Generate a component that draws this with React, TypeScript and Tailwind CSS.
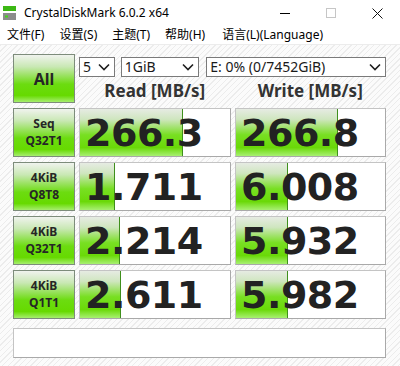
import React from "react";

interface Result {
    label: [string, string];
    read: string;
    write: string;
    readBar: number;
    writeBar: number;
}

const rows: Result[] = [
    {label: ["Seq", "Q32T1"], read: "266.3", write: "266.8", readBar: 103, writeBar: 102},
    {label: ["4KiB", "Q8T8"], read: "1.711", write: "6.008", readBar: 35, writeBar: 52},
    {label: ["4KiB", "Q32T1"], read: "2.214", write: "5.932", readBar: 40, writeBar: 52},
    {label: ["4KiB", "Q1T1"], read: "2.611", write: "5.982", readBar: 41, writeBar: 52},
];

const cjk = "font-['Noto_Sans','Noto_Sans_CJK_SC',sans-serif]";
const greenBtn =
    "border border-[#7d8c7b] bg-[linear-gradient(180deg,#f0f3ee_0%,#c9e8b4_25%,#6cdc10_62%,#66da00_86%,#a6ee6e_100%)] flex flex-col items-center justify-center text-[#262626] font-bold";

function Chevron() {
    return (
        <svg width="12" height="8" viewBox="0 0 12 8" className="shrink-0">
            <polyline points="1,1.5 6,6.5 11,1.5" fill="none" stroke="#1e1e1e" strokeWidth="1.6" />
        </svg>
    );
}

function Select({text, w}: {text: string; w: string}) {
    return (
        <div className={`${w} h-[20px] bg-white border border-[#7a7a7a] flex items-center justify-between pl-[3px] pr-[4px] text-[14px] text-[#1a1a1a] leading-none`}>
            <span>{text}</span>
            <Chevron />
        </div>
    );
}

function ResultBox({value, bar}: {value: string; bar: number}) {
    return (
        <div className="relative h-full border border-[#c4c4c4] border-r-[#a9a9a9] border-b-[#a9a9a9] bg-white flex items-center">
            <div
                className="absolute left-0 top-0 bottom-0 border-r border-[#3f8f1c] bg-[linear-gradient(180deg,#e6ebe3_0%,#cfe6bf_22%,#78df22_55%,#6ad908_82%,#a8f072_100%)]"
                style={{width: bar}}
            />
            <span className="relative pl-[5px] font-['DejaVu_Sans',sans-serif] font-bold text-[38px] leading-none text-[#222] tracking-[-0.5px]">
                {value}
            </span>
        </div>
    );
}

export default function App() {
    return (
        <div className={`w-[400px] h-[366px] bg-white flex flex-col overflow-hidden ${cjk}`}>
            {/* title bar */}
            <div className="h-[26px] flex items-center shrink-0">
                <svg width="13" height="14" viewBox="0 0 13 14" className="ml-[3px]">
                    <rect x="0" y="0" width="13" height="5" fill="#3cb814" />
                    <rect x="0" y="7" width="13" height="7" fill="#8c8c8c" />
                    <rect x="2" y="9.5" width="3" height="2" fill="#46d21e" />
                </svg>
                <span className="ml-[8px] text-[12px] text-black">CrystalDiskMark 6.0.2 x64</span>
                <div className="ml-auto flex items-center h-full">
                    <div className="w-[46px] h-full flex items-center justify-center">
                        <div className="w-[10px] h-px bg-black" />
                    </div>
                    <div className="w-[46px] h-full flex items-center justify-center">
                        <div className="w-[10px] h-[10px] border border-[#c6c6c6]" />
                    </div>
                    <div className="w-[46px] h-full flex items-center justify-center">
                        <svg width="11" height="11" viewBox="0 0 11 11">
                            <path d="M0.5 0.5 L10.5 10.5 M10.5 0.5 L0.5 10.5" stroke="#111" strokeWidth="1" />
                        </svg>
                    </div>
                </div>
            </div>

            {/* menu bar */}
            <div className="h-[18px] flex items-center gap-[15px] pl-[7px] text-[12px] text-black shrink-0">
                <span>文件(F)</span>
                <span>设置(S)</span>
                <span>主题(T)</span>
                <span>帮助(H)</span>
                <span className="ml-[2px]">语言(L)(Language)</span>
            </div>

            {/* main panel */}
            <div className="flex-1 bg-[repeating-linear-gradient(135deg,#ececec_0px,#ececec_1px,#fbfbfb_1px,#fbfbfb_4px)] border-t border-[#ececec] pt-[9px] pl-[13px] pr-[14px]">
                <div className="grid grid-cols-[62px_152px_151px] gap-x-[4px] gap-y-[5px] grid-rows-[49px_49px_49px_49px_49px]">
                    <div className={`${greenBtn} text-[16px]`}>All</div>
                    <div className="col-span-2 flex flex-col">
                        <div className="flex mt-[3px] gap-[6px]">
                            <Select text="5" w="w-[36px]" />
                            <Select text="1GiB" w="w-[79px]" />
                            <Select text="E: 0% (0/7452GiB)" w="w-[181px] ml-[1px]" />
                        </div>
                        <div className="grid grid-cols-2 gap-x-[4px] mt-[5px] font-bold text-[17px] text-[#333] leading-none">
                            <div className="text-center">Read [MB/s]</div>
                            <div className="text-center">Write [MB/s]</div>
                        </div>
                    </div>

                    {rows.map((r) => (
                        <React.Fragment key={r.label.join(" ") + r.read}>
                            <div className={`${greenBtn} text-[12px] leading-[16.5px]`}>
                                <span>{r.label[0]}</span>
                                <span>{r.label[1]}</span>
                            </div>
                            <ResultBox value={r.read} bar={r.readBar} />
                            <ResultBox value={r.write} bar={r.writeBar} />
                        </React.Fragment>
                    ))}
                </div>

                <div className="mt-[9px] h-[30px] bg-white border border-[#c4c4c4] border-r-[#a9a9a9] border-b-[#a9a9a9]" />
            </div>
        </div>
    );
}
